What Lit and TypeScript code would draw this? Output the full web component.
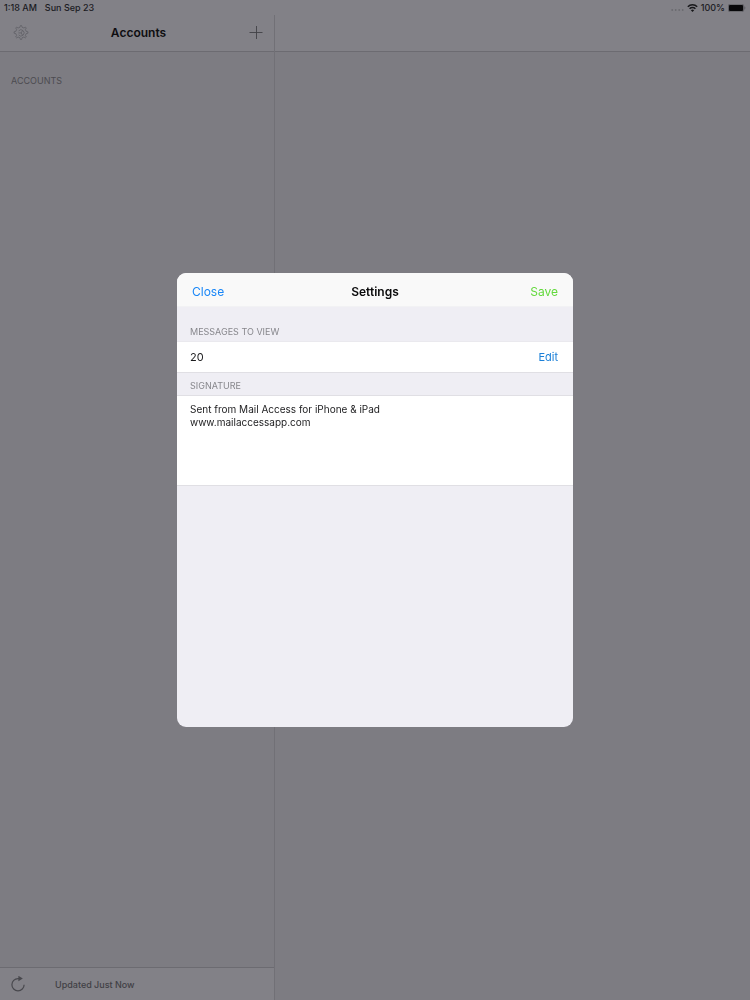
import { LitElement, html, css } from "lit";
import { customElement, state } from "lit/decorators.js";

@customElement("status-bar")
export class StatusBar extends LitElement {
  static styles = css`
    :host {
      display: flex;
      justify-content: space-between;
      align-items: center;
      height: 15px;
      padding: 0 4px;
      font-size: 9px;
      font-weight: 500;
      color: #1b1b1f;
    }
    .group {
      display: flex;
      align-items: center;
      gap: 8px;
    }
    .right {
      gap: 3px;
    }
    svg {
      display: block;
    }
  `;

  render() {
    return html`
      <div class="group"><span>1:18 AM</span><span>Sun Sep 23</span></div>
      <div class="group right">
        <svg width="13" height="10" viewBox="0 0 13 10" fill="#6a6a6f" aria-hidden="true">
          <circle cx="1.2" cy="7" r="0.9" /><circle cx="4.7" cy="7" r="0.9" />
          <circle cx="8.2" cy="7" r="0.9" /><circle cx="11.7" cy="7" r="0.9" />
        </svg>
        <svg width="11" height="8" viewBox="0 0 10 8" fill="none" stroke="#17171a" stroke-width="1.5" role="img" aria-label="Wi-Fi">
          <path d="M0.3 2.7a6.7 6.7 0 0 1 9.4 0" />
          <path d="M2.1 4.8a4.1 4.1 0 0 1 5.8 0" />
          <path d="M5 8 3.4 6.3a2.3 2.3 0 0 1 3.2 0Z" fill="#17171a" stroke="none" />
        </svg>
        <span>100%</span>
        <svg width="18" height="8" viewBox="0 0 18 8" role="img" aria-label="Battery full">
          <rect x="0.25" y="0.25" width="15.5" height="7.5" rx="1.8" fill="none" stroke="#47474b" stroke-width="0.5" />
          <rect x="0.9" y="0.9" width="14.2" height="6.2" rx="1.1" fill="#08080a" />
          <path d="M16.6 2.6c.9.3.9 2.5 0 2.8z" fill="#47474b" />
        </svg>
      </div>
    `;
  }
}

@customElement("accounts-pane")
export class AccountsPane extends LitElement {
  static styles = css`
    :host {
      display: flex;
      flex-direction: column;
      box-sizing: border-box;
      border-right: 1px solid #717076;
    }
    button {
      display: block;
      padding: 0;
      border: 0;
      background: none;
      color: inherit;
      font: inherit;
      cursor: pointer;
    }
    svg {
      display: block;
    }
    .bar {
      display: grid;
      grid-template-columns: 16px 1fr 16px;
      align-items: center;
      height: 36px;
      padding: 0 10px 0 13px;
      background: #828187;
      border-bottom: 1px solid #6c6b71;
    }
    h1 {
      margin: 0;
      text-align: center;
      font-size: 12px;
      line-height: 16px;
      font-weight: 600;
      color: #0e0e11;
    }
    .list {
      flex: 1;
      padding: 22px 11px;
    }
    h2 {
      margin: 0;
      font-size: 9px;
      line-height: 14px;
      font-weight: 400;
      color: #4c4b50;
    }
    .toolbar {
      display: flex;
      align-items: center;
      gap: 29px;
      height: 32px;
      padding: 0 10px;
      background: #828187;
      border-top: 1px solid #6c6b71;
      font-size: 9px;
      font-weight: 500;
      color: #414045;
    }
  `;

  render() {
    return html`
      <header class="bar">
        <button aria-label="Settings">
          <svg width="16" height="16" viewBox="0 0 16 16" fill="none" stroke="#606066" stroke-width="0.8" stroke-linejoin="round">
            <path d="M6.9 2.3 7.4.6h1.2l.5 1.7 1.8.7 1.5-.9.9.9-.9 1.5.7 1.8 1.8.5v1.4l-1.8.5-.7 1.8.9 1.5-.9.9-1.5-.9-1.8.7-.5 1.8H7.4l-.5-1.8-1.8-.7-1.5.9-.9-.9.9-1.5-.7-1.8-1.8-.5V6.8l1.8-.5.7-1.8-.9-1.5.9-.9 1.5.9z" />
            <path d="M5.6 5.9a3.1 3.1 0 1 1 0 4M5.4 7.9h2.8M8.2 7.9 9.6 5.4M8.2 7.9 9.6 10.4" />
          </svg>
        </button>
        <h1>Accounts</h1>
        <button aria-label="Add account">
          <svg width="16" height="16" viewBox="0 0 16 16" fill="none" stroke="#424246" stroke-width="0.9">
            <path d="M1.5 7.5h13M8.5 1v13" />
          </svg>
        </button>
      </header>
      <section class="list"><h2>ACCOUNTS</h2></section>
      <footer class="toolbar">
        <button aria-label="Refresh">
          <svg width="16" height="16" viewBox="0 0 16 16" fill="none" stroke="#48484d" stroke-width="1.2">
            <path d="M9.5 2.6H8a6.1 6.1 0 1 0 6.1 6.1" />
            <path d="M8.4-.2v5.4l4.4-2.7z" fill="#48484d" stroke="none" />
          </svg>
        </button>
        <span>Updated Just Now</span>
      </footer>
    `;
  }
}

@customElement("settings-sheet")
export class SettingsSheet extends LitElement {
  static styles = css`
    :host {
      display: flex;
      flex-direction: column;
      box-sizing: border-box;
      border-radius: 9px;
      overflow: hidden;
      background: #efeef4;
      color: #1c1c1e;
    }
    button {
      padding: 0;
      border: 0;
      background: none;
      font: inherit;
      cursor: pointer;
    }
    .bar {
      display: grid;
      grid-template-columns: 1fr auto 1fr;
      align-items: center;
      height: 34px;
      padding: 4px 15px 0;
      box-sizing: border-box;
      background: #f9f9f9;
      border-bottom: 1px solid #f2f2f4;
      font-size: 12px;
      line-height: 16px;
    }
    h1 {
      margin: 0;
      font-size: 12px;
      line-height: 16px;
      font-weight: 600;
      color: #0b0b0c;
    }
    .close {
      justify-self: start;
      color: #1886f7;
    }
    .save {
      justify-self: end;
      color: #62d93b;
    }
    .caption {
      display: block;
      padding: 6px 13px 2px;
      font-size: 9px;
      line-height: 14px;
      font-weight: 400;
      color: #87878c;
    }
    .first {
      padding-top: 18px;
    }
    .row {
      display: flex;
      justify-content: space-between;
      align-items: center;
      height: 30px;
      padding: 0 15px 0 13px;
      background: #fff;
      border-top: 1px solid #eae9ee;
      border-bottom: 1px solid #e0dfe4;
      font-size: 11px;
    }
    .edit {
      color: #1c80d8;
    }
    textarea {
      display: block;
      box-sizing: border-box;
      width: 100%;
      height: 91px;
      margin: 0;
      padding: 7px 13px;
      border: solid #e0dfe4;
      border-width: 1px 0;
      border-radius: 0;
      outline: none;
      resize: none;
      background: #fff;
      color: inherit;
      font: inherit;
      font-size: 10px;
      line-height: 13px;
    }
  `;

  @state() private count = 20;
  @state() private signature =
    "Sent from Mail Access for iPhone & iPad\nwww.mailaccessapp.com";

  render() {
    return html`
      <header class="bar">
        <button class="close">Close</button>
        <h1>Settings</h1>
        <button class="save">Save</button>
      </header>
      <span class="caption first">MESSAGES TO VIEW</span>
      <div class="row">
        <span>${this.count}</span>
        <button class="edit">Edit</button>
      </div>
      <label class="caption" for="signature">SIGNATURE</label>
      <textarea id="signature" spellcheck="false" .value=${this.signature}></textarea>
    `;
  }
}

@customElement("app-root")
export class AppRoot extends LitElement {
  static styles = css`
    :host {
      display: flex;
      flex-direction: column;
      min-height: 100vh;
      background: #7d7c82;
      font-family: Inter, "Liberation Sans", sans-serif;
    }
    status-bar {
      background: #828187;
    }
    .split {
      flex: 1;
      display: grid;
      grid-template-columns: minmax(200px, 275px) 1fr;
    }
    .detail-bar {
      height: 36px;
      background: #828187;
      border-bottom: 1px solid #6c6b71;
    }
    .overlay {
      position: fixed;
      inset: 0;
      display: grid;
      place-items: center;
      padding: 16px;
    }
    settings-sheet {
      width: 100%;
      max-width: 396px;
      min-height: 454px;
    }
  `;

  render() {
    return html`
      <status-bar></status-bar>
      <div class="split">
        <accounts-pane></accounts-pane>
        <main><div class="detail-bar"></div></main>
      </div>
      <div class="overlay">
        <settings-sheet role="dialog" aria-label="Settings"></settings-sheet>
      </div>
    `;
  }
}
